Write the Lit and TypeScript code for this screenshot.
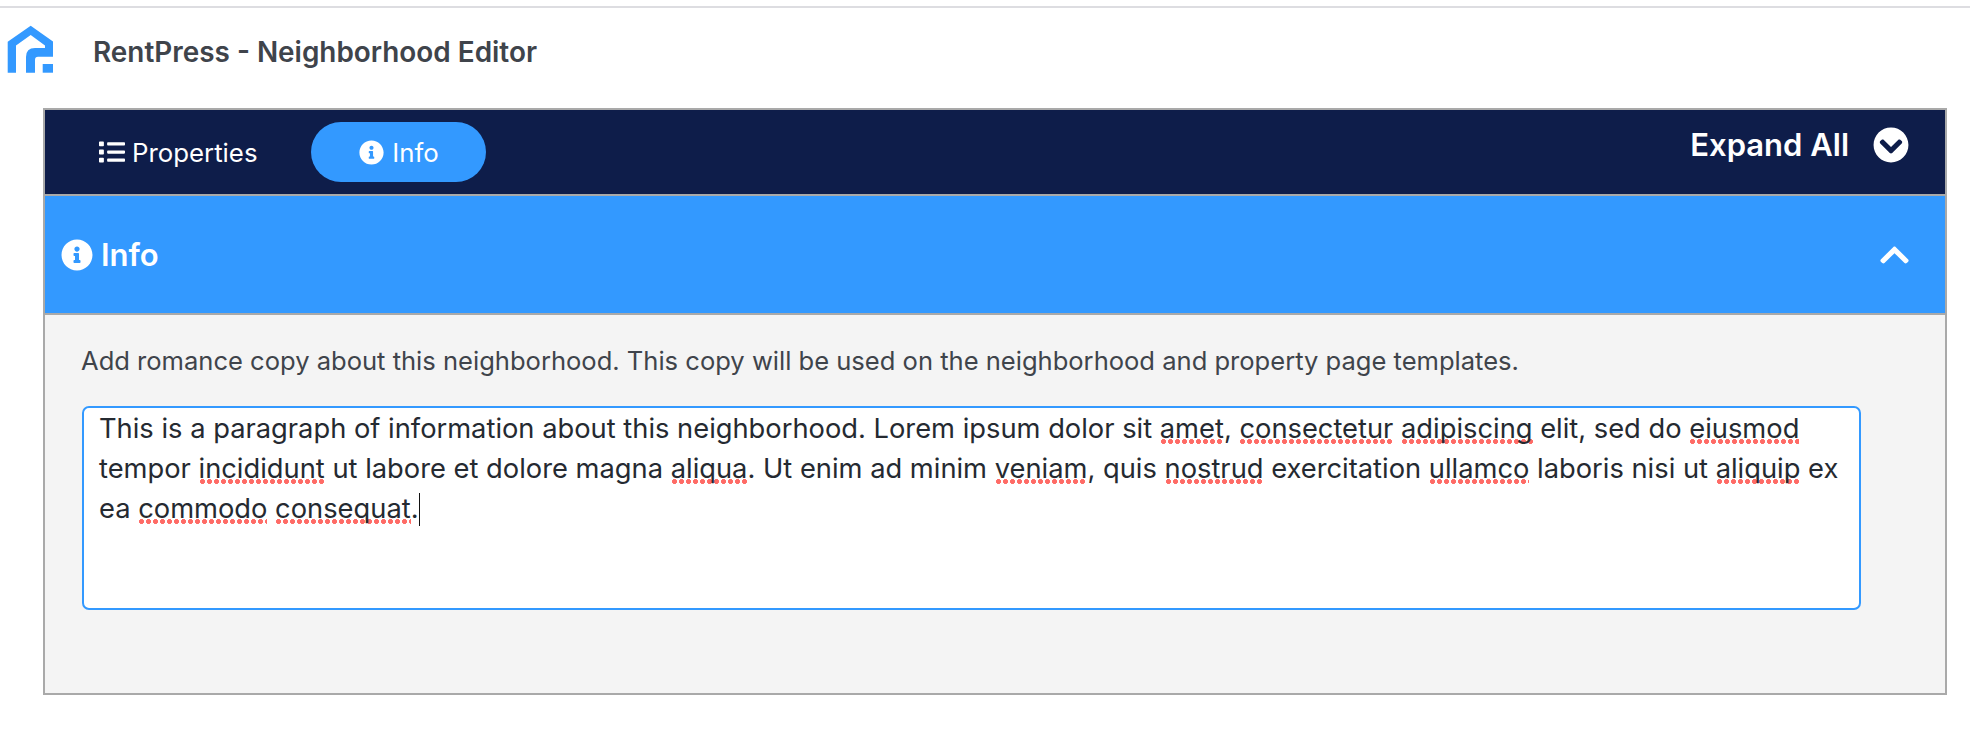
import { LitElement, html, css, svg } from "lit";
import { customElement } from "lit/decorators.js";

const infoIcon = svg`<path d="M256 8C119.043 8 8 119.083 8 256c0 136.997 111.043 248 248 248s248-111.003 248-248C504 119.083 392.957 8 256 8zm0 110c23.196 0 42 18.804 42 42s-18.804 42-42 42-42-18.804-42-42 18.804-42 42-42zm56 254c0 6.627-5.373 12-12 12h-88c-6.627 0-12-5.373-12-12v-24c0-6.627 5.373-12 12-12h12v-64h-12c-6.627 0-12-5.373-12-12v-24c0-6.627 5.373-12 12-12h64c6.627 0 12 5.373 12 12v100h12c6.627 0 12 5.373 12 12v24z"/>`;

@customElement("app-root")
export class AppRoot extends LitElement {
  static styles = css`
    :host { display: block; font-family: Inter, "Liberation Sans", sans-serif; background: #fff; height: 730px; overflow: hidden; }
    * { box-sizing: border-box; }
    .topline { height: 8px; border-bottom: 2px solid #dddde1; }
    .header { height: 100px; display: flex; align-items: flex-start; }
    .logo { width: 46px; height: 48px; margin: 17px 0 0 7px; flex: none; }
    .title { margin: 28px 0 0 40px; font-size: 27.9px; line-height: 32px; font-weight: 600; color: #3f444b; }
    .panel { margin: 0 23px 0 43px; height: 587px; border: 2px solid #a9a9a9; background: #f4f4f4; }
    .nav { height: 86px; background: #0e1d4a; border-bottom: 2px solid #a9a9a9; display: flex; align-items: flex-start; color: #fff; }
    .tab { display: flex; align-items: center; font-size: 25.8px; line-height: 30px; color: #fff; }
    .tab span { padding-top: 2px; }
    .tab svg { fill: #fff; flex: none; }
    .tab.props { margin: 12px 0 0 54px; height: 60px; width: 212px; gap: 7px; }
    .tab.info { margin-top: 12px; width: 175px; height: 60px; border-radius: 30px; background: #3399ff; justify-content: center; gap: 8px; padding-left: 1px; }
    .expand { margin: 16px 36px 0 auto; display: flex; align-items: center; gap: 24px; font-size: 31px; line-height: 36px; font-weight: 600; }
    .expand svg { width: 36px; height: 36px; fill: #fff; margin-top: 1px; }
    .acc { height: 119px; background: #3399ff; border-bottom: 2px solid #a9a9a9; display: flex; align-items: center; padding: 0 36px 0 16px; color: #fff; font-size: 31px; font-weight: 600; gap: 8px; }
    .acc svg { fill: #fff; flex: none; }
    .acc .chev { margin-left: auto; width: 29px; height: 34px; }
    .body { padding: 26px 84px 0 36px; }
    .desc { font-size: 25.55px; line-height: 40px; color: #3f444b; }
    .box { margin: 25px 0 0 1px; height: 203.5px; border: 2px solid #3399ff; border-radius: 7px; background: #fff; padding: 1px 15px 0; font-size: 27.3px; line-height: 40px; color: #252a31; }
    .sp { background: radial-gradient(circle at center, #ff6b66 2.2px, transparent 2.7px) 0 calc(100% - 1px) / 7px 5px repeat-x; }
    .caret { display: inline-block; width: 1.5px; height: 33px; background: #111; vertical-align: -8px; }
  `;

  render() {
    const sp = (t: string) => html`<span class="sp">${t}</span>`;
    return html`
      <div class="topline"></div>
      <div class="header">
        <svg class="logo" viewBox="7 25 46 48">
          <path fill="#3399ff" d="M7.7 41.7 30.7 25.7 53.3 41.7V56.7H38Q35 56.7 35 60V72.7H26V57Q26 48 35 48H45V45.5L30.7 35 16 45.5V72.7H7.7Z"/>
          <rect fill="#3399ff" x="42.7" y="64" width="10.6" height="8.7"/>
        </svg>
        <div class="title">RentPress - Neighborhood Editor</div>
      </div>
      <div class="panel">
        <div class="nav">
          <div class="tab props">
            <svg width="26" height="30" viewBox="0 0 512 512"><path d="M80 368H16a16 16 0 0 0-16 16v64a16 16 0 0 0 16 16h64a16 16 0 0 0 16-16v-64a16 16 0 0 0-16-16zm0-320H16A16 16 0 0 0 0 64v64a16 16 0 0 0 16 16h64a16 16 0 0 0 16-16V64a16 16 0 0 0-16-16zm0 160H16a16 16 0 0 0-16 16v64a16 16 0 0 0 16 16h64a16 16 0 0 0 16-16v-64a16 16 0 0 0-16-16zm416 176H176a16 16 0 0 0-16 16v32a16 16 0 0 0 16 16h320a16 16 0 0 0 16-16v-32a16 16 0 0 0-16-16zm0-320H176a16 16 0 0 0-16 16v32a16 16 0 0 0 16 16h320a16 16 0 0 0 16-16V80a16 16 0 0 0-16-16zm0 160H176a16 16 0 0 0-16 16v32a16 16 0 0 0 16 16h320a16 16 0 0 0 16-16v-32a16 16 0 0 0-16-16z"/></svg>
            <span>Properties</span>
          </div>
          <div class="tab info">
            <svg width="25" height="25" viewBox="0 0 512 512">${infoIcon}</svg>
            <span>Info</span>
          </div>
          <div class="expand">
            <span>Expand All</span>
            <svg viewBox="0 0 512 512"><path d="M504 256c0 137-111 248-248 248S8 393 8 256 119 8 256 8s248 111 248 248zM273 369.9l135.5-135.5c9.4-9.4 9.4-24.6 0-33.9l-17-17c-9.4-9.4-24.6-9.4-33.9 0L256 285.1 154.4 183.5c-9.4-9.4-24.6-9.4-33.9 0l-17 17c-9.4 9.4-9.4 24.6 0 33.9L239 369.9c9.4 9.4 24.6 9.4 34 0z"/></svg>
          </div>
        </div>
        <div class="acc">
          <svg width="32" height="32" viewBox="0 0 512 512">${infoIcon}</svg>
          <span>Info</span>
          <svg class="chev" viewBox="0 0 448 512"><path d="M240.971 130.524l194.343 194.343c9.373 9.373 9.373 24.569 0 33.941l-22.667 22.667c-9.357 9.357-24.522 9.375-33.901.04L224 227.495 69.255 381.516c-9.379 9.335-24.544 9.317-33.901-.04l-22.667-22.667c-9.373-9.373-9.373-24.569 0-33.941L207.03 130.525c9.372-9.373 24.568-9.373 33.941-.001z"/></svg>
        </div>
        <div class="body">
          <div class="desc">Add romance copy about this neighborhood. This copy will be used on the neighborhood and property page templates.</div>
          <div class="box">This is a paragraph of information about this neighborhood. Lorem ipsum dolor sit ${sp("amet")}, ${sp("consectetur")} ${sp("adipiscing")} elit, sed do ${sp("eiusmod")} tempor ${sp("incididunt")} ut labore et dolore magna ${sp("aliqua")}. Ut enim ad minim ${sp("veniam")}, quis ${sp("nostrud")} exercitation ${sp("ullamco")} laboris nisi ut ${sp("aliquip")} ex ea ${sp("commodo")} ${sp("consequat")}.<span class="caret"></span></div>
        </div>
      </div>
    `;
  }
}
